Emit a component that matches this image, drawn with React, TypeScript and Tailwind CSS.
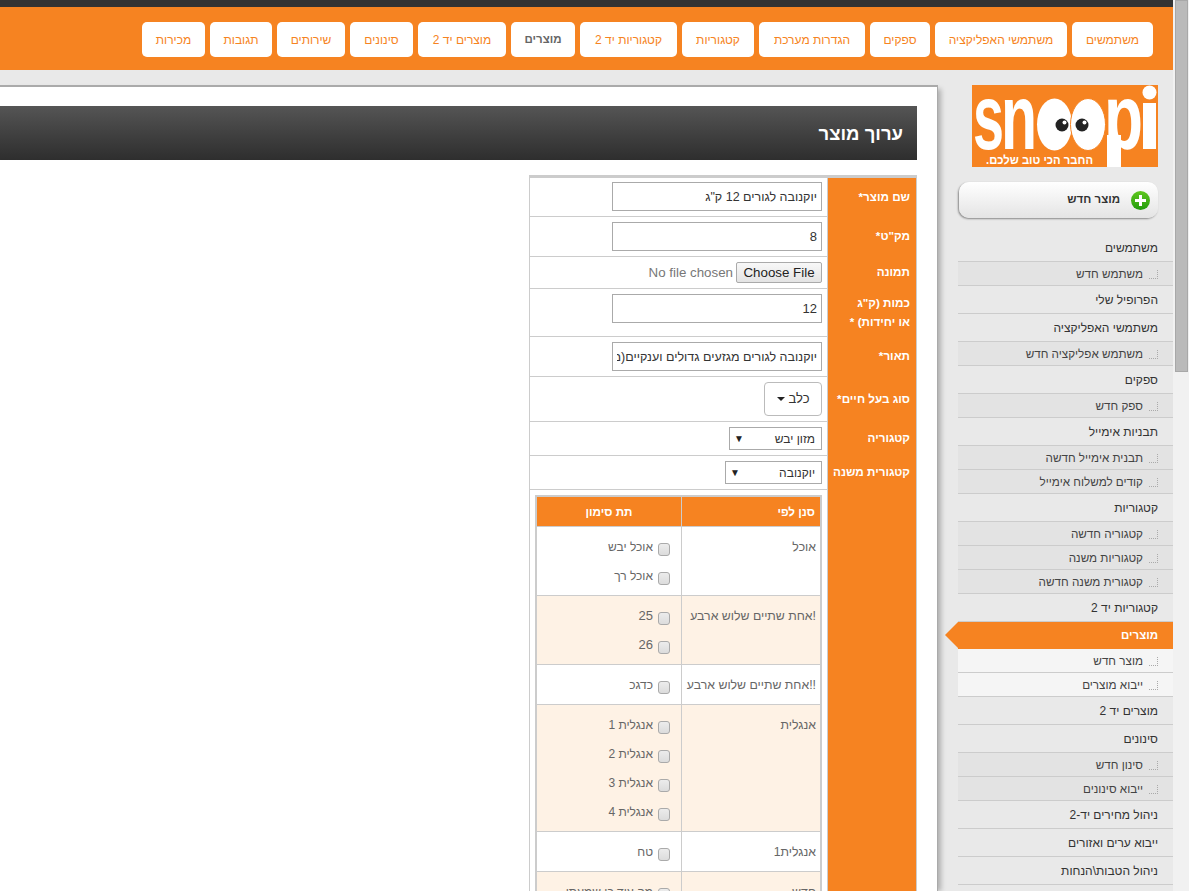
import React from 'react';

const font = { fontFamily: '"Liberation Sans", Arial, sans-serif' };

const navItems = [
  { label: 'משתמשים', w: 'w-[81px]' },
  { label: 'משתמשי האפליקציה', w: 'w-[132px]' },
  { label: 'ספקים', w: 'w-[60px]' },
  { label: 'הגדרות מערכת', w: 'w-[106px]' },
  { label: 'קטגוריות', w: 'w-[72px]' },
  { label: 'קטגוריות יד 2', w: 'w-[97px]' },
  { label: 'מוצרים', w: 'w-[64px]', current: true },
  { label: 'מוצרים יד 2', w: 'w-[88px]' },
  { label: 'סינונים', w: 'w-[63px]' },
  { label: 'שירותים', w: 'w-[68px]' },
  { label: 'תגובות', w: 'w-[62px]' },
  { label: 'מכירות', w: 'w-[63px]' },
];

type MenuItem = { label: string; kind: 'main' | 'sub' | 'active' | 'activeSub' };

const menu: MenuItem[] = [
  { label: 'משתמשים', kind: 'main' },
  { label: 'משתמש חדש', kind: 'sub' },
  { label: 'הפרופיל שלי', kind: 'main' },
  { label: 'משתמשי האפליקציה', kind: 'main' },
  { label: 'משתמש אפליקציה חדש', kind: 'sub' },
  { label: 'ספקים', kind: 'main' },
  { label: 'ספק חדש', kind: 'sub' },
  { label: 'תבניות אימייל', kind: 'main' },
  { label: 'תבנית אימייל חדשה', kind: 'sub' },
  { label: 'קודים למשלוח אימייל', kind: 'sub' },
  { label: 'קטגוריות', kind: 'main' },
  { label: 'קטגוריה חדשה', kind: 'sub' },
  { label: 'קטגוריות משנה', kind: 'sub' },
  { label: 'קטגורית משנה חדשה', kind: 'sub' },
  { label: 'קטגוריות יד 2', kind: 'main' },
  { label: 'מוצרים', kind: 'active' },
  { label: 'מוצר חדש', kind: 'activeSub' },
  { label: 'ייבוא מוצרים', kind: 'activeSub' },
  { label: 'מוצרים יד 2', kind: 'main' },
  { label: 'סינונים', kind: 'main' },
  { label: 'סינון חדש', kind: 'sub' },
  { label: 'ייבוא סינונים', kind: 'sub' },
  { label: 'ניהול מחירים יד-2', kind: 'main' },
  { label: 'ייבוא ערים ואזורים', kind: 'main' },
  { label: 'ניהול הטבות\\הנחות', kind: 'main' },
];

type FilterRow = { name: string; options: string[]; tint: boolean; h: string };

const filters: FilterRow[] = [
  { name: 'אוכל', options: ['אוכל יבש', 'אוכל רך'], tint: false, h: 'h-[69px]' },
  { name: '!אחת שתיים שלוש ארבע', options: ['25', '26'], tint: true, h: 'h-[69px]' },
  { name: '!!אחת שתיים שלוש ארבע', options: ['כדגכ'], tint: false, h: 'h-[40px]' },
  { name: 'אנגלית', options: ['אנגלית 1', 'אנגלית 2', 'אנגלית 3', 'אנגלית 4'], tint: true, h: 'h-[127px]' },
  { name: 'אנגלית1', options: ['טח'], tint: false, h: 'h-[40px]' },
  { name: 'חדש', options: ['מה עוד כן שמעתי'], tint: true, h: 'h-[40px]' },
];

function Logo() {
  return (
    <svg width="186" height="82" viewBox="0 0 186 82" direction="ltr" className="block">
      <rect width="186" height="82" fill="#f68321" />
      <g fill="#fff" fontFamily="'Liberation Sans', Arial, sans-serif" fontWeight="700">
        <text x="1" y="64" fontSize="92" textLength="31" lengthAdjust="spacingAndGlyphs">s</text>
        <text x="29" y="64" fontSize="92" textLength="36" lengthAdjust="spacingAndGlyphs">n</text>
        <text x="132" y="64" fontSize="92" textLength="39" lengthAdjust="spacingAndGlyphs">p</text>
        <rect x="135" y="50" width="14" height="32" />
        <rect x="171" y="18" width="13" height="46" />
        <circle cx="177.5" cy="7.5" r="7" />
      </g>
      <ellipse cx="82.5" cy="39.5" rx="17.5" ry="26" fill="#fff" />
      <ellipse cx="116" cy="39.5" rx="17.5" ry="26" fill="#fff" stroke="#f68321" strokeWidth="1" />
      <circle cx="90" cy="40" r="6.5" fill="#222" />
      <circle cx="110" cy="40" r="6.5" fill="#222" />
      <circle cx="92.5" cy="37.5" r="2" fill="#fff" />
      <circle cx="112.5" cy="37.5" r="2" fill="#fff" />
      <text
        x="121"
        y="79"
        fill="#fff"
        fontSize="12"
        fontWeight="700"
        direction="rtl"
        textLength="107"
        lengthAdjust="spacingAndGlyphs"
        fontFamily="'Liberation Sans', Arial, sans-serif"
      >
        החבר הכי טוב שלכם.
      </text>
    </svg>
  );
}

function DottedMark() {
  return <span className="inline-block w-[9px] h-[9px] border-r border-b border-dotted border-[#aaa] -mb-[1px]" />;
}

function Sidebar() {
  return (
    <aside className="w-[235px] shrink-0 flex flex-col">
      <div className="pt-[15px] pr-[15px] flex justify-start">
        <Logo />
      </div>
      <div className="mt-[15px] ml-[21px] mr-[15px] h-[36px] rounded-[10px] bg-gradient-to-b from-white to-[#e4e4e4] shadow-[-1px_1px_2px_#888] flex items-center pr-[8px] gap-[11px]">
        <span className="w-[19px] h-[19px] rounded-full bg-gradient-to-b from-[#5fc81f] to-[#1e9c0c] relative shrink-0">
          <span className="absolute left-[4px] top-[8px] w-[11px] h-[3px] bg-white" />
          <span className="absolute left-[8px] top-[4px] w-[3px] h-[11px] bg-white" />
        </span>
        <span className="text-[11.5px] font-bold text-[#333]">מוצר חדש</span>
      </div>
      <ul className="mt-[16px] ml-[20px]">
        {menu.map((item, i) => {
          if (item.kind === 'active') {
            return (
              <li
                key={i}
                className="relative h-[27px] bg-[#f68321] text-white text-[11.5px] font-bold flex items-center pr-[15px]"
              >
                {item.label}
                <span className="absolute top-0 -left-[13px] w-0 h-0 border-y-[13.5px] border-y-transparent border-r-[13px] border-r-[#f68321]" />
              </li>
            );
          }
          if (item.kind === 'main') {
            return (
              <li
                key={i}
                className="h-[28px] border-b border-[#ccc] text-[12px] text-[#333] flex items-center pr-[15px] pt-[1px]"
              >
                {item.label}
              </li>
            );
          }
          return (
            <li
              key={i}
              className={`h-[24px] border-b border-[#ccc] text-[11.7px] text-[#444] flex items-center pr-[15px] gap-[6px] ${
                item.kind === 'sub' ? 'bg-[#e3e3e3]' : 'bg-[#f5f5f5]'
              }`}
            >
              <DottedMark />
              {item.label}
            </li>
          );
        })}
      </ul>
    </aside>
  );
}

function FormRow({
  label,
  h,
  labelPt,
  contentPt = 'pt-[5px]',
  children,
}: {
  label: React.ReactNode;
  h: string;
  labelPt: string;
  contentPt?: string;
  children: React.ReactNode;
}) {
  return (
    <div className={`flex ${h}`}>
      <div className={`w-[88px] shrink-0 bg-[#f68321] text-white text-[11.7px] font-bold pr-[6px] leading-[19px] whitespace-nowrap ${labelPt}`}>
        {label}
      </div>
      <div className="w-[1px] bg-[#ccc]" />
      <div className={`flex-1 border-b border-[#ccc] pr-[5px] flex justify-start items-start ${contentPt}`}>
        {children}
      </div>
    </div>
  );
}

function TextInput({ value, size = 'text-[12.5px]' }: { value: string; size?: string }) {
  return (
    <input
      readOnly
      dir="rtl"
      value={value}
      className={`w-[210px] h-[29px] border border-[#aaa] px-[4px] text-[#333] bg-white outline-none ${size}`}
    />
  );
}

function FakeSelect({ value, w }: { value: string; w: string }) {
  return (
    <div className={`${w} h-[23px] border border-[#aaa] bg-white text-[12px] text-[#333] flex items-center justify-between pr-[6px] pl-[4px]`}>
      <span>{value}</span>
      <span className="text-[10px] text-[#222]">▼</span>
    </div>
  );
}

function Checkbox() {
  return (
    <span className="w-[12px] h-[13px] rounded-[3px] border border-[#aaa] bg-gradient-to-b from-[#ececec] to-[#dcdcdc] shrink-0 mt-[5px]" />
  );
}

function FilterTable() {
  return (
    <div className="w-[287px] border-2 border-[#ccc] border-b-0 text-[12px] text-[#666]">
      <div className="flex h-[30px] bg-[#f68321] text-white text-[11.7px] font-bold border-b border-[#ccc]">
        <div className="w-[138px] shrink-0 pr-[5px] flex items-center">סנן לפי</div>
        <div className="w-[1px] bg-[#ccc]" />
        <div className="flex-1 flex items-center justify-center">תת סימון</div>
      </div>
      {filters.map((row, i) => (
        <div key={i} className={`flex ${row.h} border-b border-[#ccc] ${row.tint ? 'bg-[#fef2e5]' : 'bg-white'}`}>
          <div className="w-[138px] shrink-0 pr-[4px] pt-[11px] leading-[18px] whitespace-nowrap text-[12.3px]">{row.name}</div>
          <div className="w-[1px] bg-[#ccc]" />
          <div className="flex-1 pr-[11px] pt-[11px] flex flex-col gap-[11px]">
            {row.options.map((o) => (
              <div key={o} className="flex items-start gap-[5px] h-[18px] leading-[18px]">
                <Checkbox />
                <span className={/^\d+$/.test(o) ? 'text-[13px]' : ''}>{o}</span>
              </div>
            ))}
          </div>
        </div>
      ))}
    </div>
  );
}

function MainPanel() {
  return (
    <main className="w-[938px] shrink-0 mt-[15px] h-[806px] bg-white border-t-2 border-r border-[#aaa] shadow-[5px_2px_5px_-2px_rgba(0,0,0,0.25)] pt-[19px] pr-[20px] overflow-hidden">
      <div className="h-[54px] bg-gradient-to-b from-[#555] to-[#2e2e2e] text-white text-[18.5px] font-bold flex items-center pr-[14px] pt-[1px]">
        ערוך מוצר
      </div>
      <div className="mt-[15px] w-[388px] border-t-[3px] border-l border-r border-[#ccc]">
        <FormRow label="שם מוצר*" h="h-[39px]" labelPt="pt-[9px]" contentPt="pt-[4px]">
          <TextInput value={'יוקנובה לגורים 12 ק"ג'} />
        </FormRow>
        <FormRow label={'מק"ט*'} h="h-[40px]" labelPt="pt-[9px]">
          <TextInput value="8" size="text-[13px]" />
        </FormRow>
        <FormRow label="תמונה" h="h-[32px]" labelPt="pt-[5px]">
          <div className="flex items-center gap-[3px] text-[13.33px]" dir="ltr">
            <span className="text-[#777]">No file chosen</span>
            <span className="h-[21px] w-[86px] border border-[#aaa] rounded-[2px] bg-gradient-to-b from-[#f8f8f8] to-[#e4e4e4] text-[#222] flex items-center justify-center">
              Choose File
            </span>
          </div>
        </FormRow>
        <FormRow
          label={
            <>
              כמות (ק"ג
              <br />
              או יחידות) *
            </>
          }
          h="h-[48px]"
          labelPt="pt-[4px]"
        >
          <TextInput value="12" size="text-[13px]" />
        </FormRow>
        <FormRow label="תאור*" h="h-[40px]" labelPt="pt-[9px]">
          <TextInput value="יוקנובה לגורים מגזעים גדולים וענקיים(משקל בוגר מעל 25 קג)" />
        </FormRow>
        <FormRow label="סוג בעל חיים*" h="h-[45px]" labelPt="pt-[12px]">
          <div className="w-[58px] h-[34px] rounded-[4px] border border-[#bbb] bg-white text-[13px] text-[#333] flex items-center justify-center gap-[4px]">
            כלב
            <span className="w-0 h-0 border-x-[4px] border-x-transparent border-t-[4px] border-t-[#222]" />
          </div>
        </FormRow>
        <FormRow label="קטגוריה" h="h-[34px]" labelPt="pt-[6px]">
          <FakeSelect value="מזון יבש" w="w-[93px]" />
        </FormRow>
        <FormRow label="קטגורית משנה" h="h-[34px]" labelPt="pt-[6px]">
          <FakeSelect value="יוקנובה" w="w-[97px]" />
        </FormRow>
        <div className="flex">
          <div className="w-[88px] shrink-0 bg-[#f68321]" />
          <div className="w-[1px] bg-[#ccc]" />
          <div className="flex-1 pr-[5px] pt-[5px]">
            <FilterTable />
          </div>
        </div>
      </div>
    </main>
  );
}

export default function App() {
  return (
    <div dir="rtl" className="h-[891px] overflow-hidden flex bg-[#f1f1f1]" style={font}>
      <div dir="ltr" className="w-[16px] shrink-0">
        <div className="w-[13px] ml-[2px] h-[372px] bg-[#bababa] border border-[#a8a8a8]" />
      </div>
      <div className="w-[1173px] shrink-0 bg-[#e9e9e9] overflow-hidden">
        <div className="h-[7px] bg-[#333]" />
        <nav className="h-[63px] bg-[#f68321] flex items-start gap-[5px] pr-[20px] pt-[15px]">
          {navItems.map((n) => (
            <a
              key={n.label}
              className={`h-[35px] bg-white rounded-[5px] flex items-center justify-center whitespace-nowrap shrink-0 ${n.w} ${
                n.current ? 'text-[11.5px] font-bold text-[#666]' : 'text-[12px] text-[#f68321]'
              }`}
            >
              {n.label}
            </a>
          ))}
        </nav>
        <div className="flex h-[821px]">
          <Sidebar />
          <MainPanel />
        </div>
      </div>
    </div>
  );
}
